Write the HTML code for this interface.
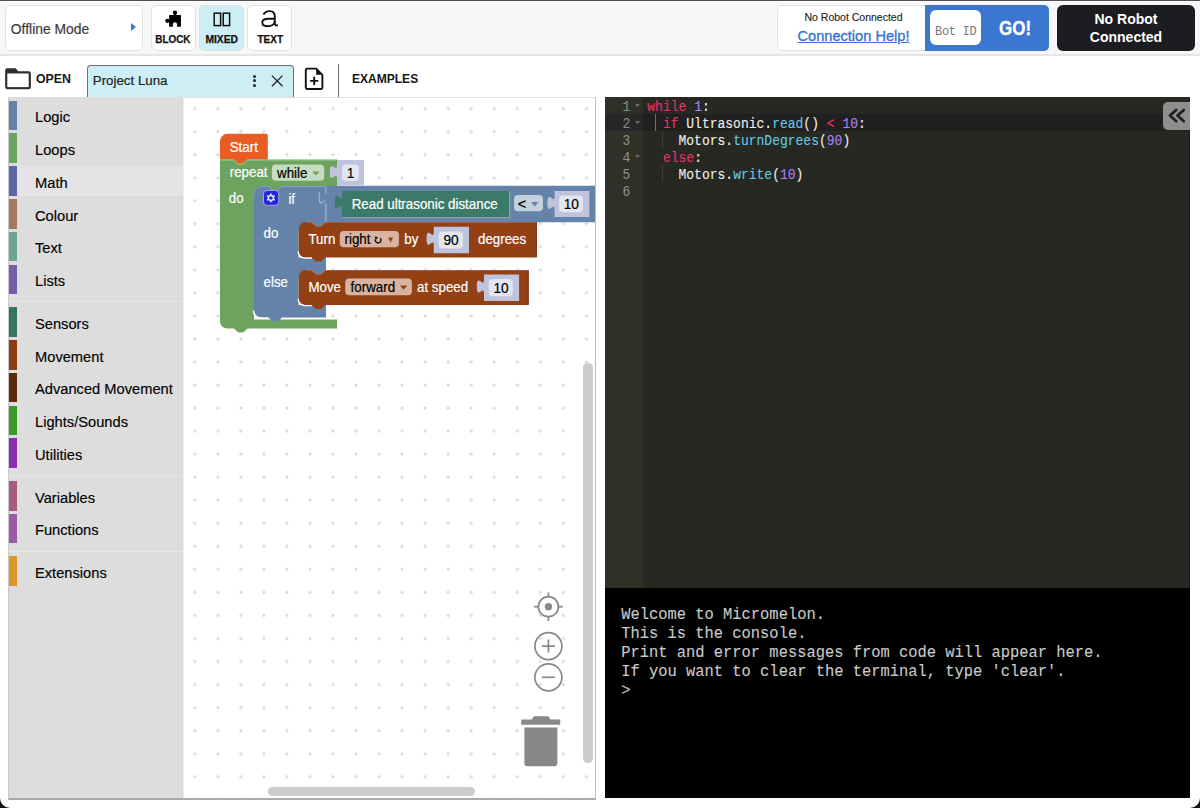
<!DOCTYPE html>
<html><head><meta charset="utf-8">
<style>
*{box-sizing:border-box}
html,body{margin:0;padding:0}
body{width:1200px;height:808px;position:relative;overflow:hidden;background:#fff;font-family:"Liberation Sans",sans-serif;color:#000}
.a{position:absolute}
.hbtn{position:absolute;top:5px;height:46px;background:#fff;border:1px solid #e2e2e2;border-radius:5px}
.cat{position:absolute;left:9px;width:174px;height:33px}
.cat .s{position:absolute;left:0.4px;top:0;width:7.6px;height:29.6px}
.cat .t{position:absolute;left:25.6px;top:1.6px;line-height:30px;font-size:15.4px;color:#000;white-space:nowrap;transform:scaleX(0.953);transform-origin:left;-webkit-text-stroke:0.15px #000}
.mono{font-family:"Liberation Mono",monospace}
</style></head>
<body>
<!--HEADER-->
<!-- top dark line -->
<div class="a" style="left:0;top:0;width:1200px;height:1px;background:#505050"></div>
<!-- header -->
<div class="a" style="left:0;top:2px;width:1200px;height:52px;background:#f7f7f7"></div>
<div class="a" style="left:0;top:54px;width:1200px;height:1.8px;background:#e6e6e6"></div>

<div class="hbtn" style="left:5px;width:138px"></div>
<div class="a" style="left:10.8px;top:19.5px;font-size:13.9px;color:#3c3c3c;line-height:18px;-webkit-text-stroke:0.2px #3c3c3c">Offline Mode</div>
<div class="a" style="left:131px;top:23.3px;width:0;height:0;border-left:5.6px solid #3a78d8;border-top:4.6px solid transparent;border-bottom:4.6px solid transparent"></div>

<div class="hbtn" style="left:150.6px;width:45px"></div>
<div class="hbtn" style="left:198.8px;width:45.2px;background:#cdeef5"></div>
<div class="hbtn" style="left:247.2px;width:45.3px"></div>
<div class="a" style="left:150.6px;top:32.6px;width:45px;text-align:center;font-size:11.2px;font-weight:bold;line-height:12px;color:#111;-webkit-text-stroke:0.25px #111"><span style="display:inline-block;transform:scaleX(0.885)">BLOCK</span></div>
<div class="a" style="left:198.8px;top:32.6px;width:45.2px;text-align:center;font-size:11.2px;font-weight:bold;line-height:12px;color:#111;-webkit-text-stroke:0.25px #111"><span style="display:inline-block;transform:scaleX(0.92)">MIXED</span></div>
<div class="a" style="left:247.2px;top:32.6px;width:45.3px;text-align:center;font-size:11.2px;font-weight:bold;line-height:12px;color:#111;-webkit-text-stroke:0.25px #111"><span style="display:inline-block;transform:scaleX(0.9)">TEXT</span></div>

<!-- header icons -->
<svg class="a" style="left:160px;top:8px" width="26" height="22" viewBox="160 8 26 22">
<rect x="169.1" y="14.9" width="11.85" height="11.9" rx="0.6" fill="#000"/>
<circle cx="175" cy="12.6" r="2.05" fill="#000"/><rect x="173.6" y="12.6" width="2.8" height="3" fill="#000"/>
<circle cx="167.3" cy="20.85" r="2.1" fill="#000"/><rect x="167.3" y="19.4" width="3" height="2.9" fill="#000"/>
<circle cx="175" cy="24.2" r="2.05" fill="#fff"/><rect x="172.95" y="24.2" width="4.1" height="3" fill="#fff"/>
</svg>
<svg class="a" style="left:210px;top:10px" width="24" height="19" viewBox="210 10 24 19">
<rect x="214.2" y="13.2" width="6.4" height="12.4" fill="none" stroke="#111" stroke-width="1.5"/>
<rect x="223.2" y="13.2" width="6.4" height="12.4" fill="none" stroke="#111" stroke-width="1.5"/>
</svg>
<svg class="a" style="left:258px;top:8px" width="24" height="22" viewBox="258 8 24 22">
<path d="M263.5,14.7 C264.6,12.2 266.8,11.1 269.6,11.1 C273.1,11.1 274.8,12.9 274.8,16.3 V23.8 C274.8,25.1 275.8,25.5 277.9,25.3" fill="none" stroke="#111" stroke-width="1.9"/>
<path d="M274.8,18.7 H268.5 C264.4,18.7 262.3,20.1 262.3,22.5 C262.3,24.9 264.2,26.2 267.2,26.2 C271.2,26.2 274.8,24.4 274.8,21.2" fill="none" stroke="#111" stroke-width="1.9"/>
</svg>

<!-- second row -->
<svg class="a" style="left:3px;top:66px" width="31" height="26" viewBox="3 66 31 26">
<path d="M5.15,70.5 Q5.15,68.3 7.35,68.3 H15.6 L18.3,71.3 H28.7 Q30.9,71.3 30.9,73.5 V87.1 Q30.9,89.3 28.7,89.3 H7.35 Q5.15,89.3 5.15,87.1 Z" fill="#2e2e2e"/>
<rect x="7.3" y="73.5" width="21.4" height="13.6" fill="#fff"/>
</svg>
<div class="a" style="left:36px;top:71px;font-size:13px;font-weight:bold;line-height:16px;color:#161616"><span style="display:inline-block;transform:scaleX(0.95);transform-origin:left">OPEN</span></div>

<div class="a" style="left:87px;top:65px;width:207px;height:32.4px;background:#cdeef5;border:1.2px solid #6e6e6e;border-bottom:none;border-radius:4px 4px 0 0"></div>
<div class="a" style="left:92.8px;top:73.3px;font-size:13.3px;line-height:16px;color:#222;-webkit-text-stroke:0.2px #222">Project Luna</div>
<div class="a" style="left:253.1px;top:75px;width:3px;height:3px;border-radius:50%;background:#222"></div>
<div class="a" style="left:253.1px;top:79.3px;width:3px;height:3px;border-radius:50%;background:#222"></div>
<div class="a" style="left:253.1px;top:83.6px;width:3px;height:3px;border-radius:50%;background:#222"></div>
<svg class="a" style="left:271px;top:75px" width="12" height="12" viewBox="0 0 12 12"><path d="M0.9,0.6 L11.5,11.3 M11.5,0.6 L0.9,11.3" stroke="#222" stroke-width="1.3"/></svg>

<svg class="a" style="left:303px;top:65px" width="23" height="27" viewBox="303 65 23 27">
<path d="M307.2,68.6 H316.2 L322.4,74.8 V87.6 C322.4,88.5 321.8,89 321,89 H307.2 C306.4,89 305.8,88.5 305.8,87.6 V70 C305.8,69.1 306.4,68.6 307.2,68.6 Z" fill="none" stroke="#111" stroke-width="1.9" stroke-linejoin="round"/>
<path d="M316.2,68.6 V74.8 H322.4 Z" fill="#111"/>
<path d="M314.2,76.8 V85 M310.1,80.9 H318.3" stroke="#111" stroke-width="1.9"/>
</svg>
<div class="a" style="left:338.3px;top:64.4px;width:1.2px;height:32.5px;background:#666"></div>
<div class="a" style="left:352.3px;top:71px;font-size:12.6px;font-weight:bold;line-height:16px;color:#161616"><span style="display:inline-block;transform:scaleX(0.955);transform-origin:left">EXAMPLES</span></div>

<!-- connection box -->
<div class="a" style="left:777.3px;top:4.7px;width:272px;height:46.6px;background:#fff;border:1px solid #e2e2e2;border-radius:5px"></div>
<div class="a" style="left:925.3px;top:4.7px;width:124px;height:46.6px;background:#3b76d0;border-radius:0 5px 5px 0"></div>
<div class="a" style="left:777px;top:11.2px;width:153px;text-align:center;font-size:10.5px;line-height:13px;color:#222;-webkit-text-stroke:0.12px #222">No Robot Connected</div>
<div class="a" style="left:777px;top:27.3px;width:153px;text-align:center;font-size:14.6px;line-height:18px;color:#3a74d0;text-decoration:underline;-webkit-text-stroke:0.35px #3a74d0">Connection Help!</div>
<div class="a" style="left:930px;top:10px;width:50.7px;height:35.3px;background:#fff;border-radius:6px"></div>
<div class="a mono" style="left:935px;top:25.3px;font-size:12px;line-height:14px;color:#777;letter-spacing:-0.3px">Bot ID</div>
<div class="a" style="left:999.3px;top:16.5px;font-size:19.5px;font-weight:bold;line-height:22px;color:#fff;-webkit-text-stroke:0.3px #fff"><span style="display:inline-block;transform:scaleX(0.87);transform-origin:left">GO!</span></div>
<div class="a" style="left:1057px;top:5px;width:138px;height:45.6px;background:#1c1d20;border-radius:6px"></div>
<div class="a" style="left:1057px;top:10px;width:138px;text-align:center;font-size:14px;font-weight:bold;line-height:18px;color:#fff">No Robot<br>Connected</div>

<!--/HEADER-->
<!--TOOLBOX-->
<!-- workspace -->
<div class="a" style="left:8px;top:96.5px;width:588px;height:703.5px;background:#fff;border-top:1.5px solid #e0e0e0;border-left:1px solid #c8c8c8;border-right:1.5px solid #bdbdbd;border-bottom:2px solid #aaa"></div>
<svg class="a" style="left:183px;top:97px" width="412" height="701" viewBox="183 97 412 701">
<defs><pattern id="grid" x="217.8" y="131.6" width="23.04" height="23.04" patternUnits="userSpaceOnUse">
<path d="M-1.7 0h3.4M0 -1.7v3.4" stroke="#c8c8c8" stroke-width="0.9"/>
<path d="M21.34 0h3.4M23.04 -1.7v3.4M-1.7 23.04h3.4M0 21.34v3.4M21.34 23.04h3.4M23.04 21.34v3.4" stroke="#c8c8c8" stroke-width="0.9"/>
</pattern></defs>
<rect x="183" y="97" width="412" height="701" fill="url(#grid)"/>
</svg>
<div class="a" style="left:9px;top:97px;width:174px;height:701px;background:#dddddd;border-right:0.8px solid #d8d8d8"></div>
<div class="a" style="left:183px;top:97px;width:1.3px;height:701px;background:#f0f0f0"></div>
<div class="a" style="left:9px;top:166.2px;width:174px;height:30px;background:#e4e4e4"></div>
<div class="a" style="left:9px;top:301px;width:174px;height:1px;background:#e6e6e6"></div>
<div class="a" style="left:9px;top:475px;width:174px;height:1px;background:#e6e6e6"></div>
<div class="a" style="left:9px;top:550.5px;width:174px;height:1px;background:#e6e6e6"></div>
<div class="cat" style="top:100.6px"><div class="s" style="background:#6681a8"></div><div class="t">Logic</div></div>
<div class="cat" style="top:133.4px"><div class="s" style="background:#6ba360"></div><div class="t">Loops</div></div>
<div class="cat" style="top:166.2px"><div class="s" style="background:#5e68a6"></div><div class="t">Math</div></div>
<div class="cat" style="top:199.0px"><div class="s" style="background:#a5795f"></div><div class="t">Colour</div></div>
<div class="cat" style="top:231.8px"><div class="s" style="background:#6ca68f"></div><div class="t">Text</div></div>
<div class="cat" style="top:264.6px"><div class="s" style="background:#775ea8"></div><div class="t">Lists</div></div>
<div class="cat" style="top:307.2px"><div class="s" style="background:#357465"></div><div class="t">Sensors</div></div>
<div class="cat" style="top:340.0px"><div class="s" style="background:#8e3c12"></div><div class="t">Movement</div></div>
<div class="cat" style="top:372.8px"><div class="s" style="background:#5a2a0c"></div><div class="t">Advanced Movement</div></div>
<div class="cat" style="top:405.6px"><div class="s" style="background:#3e9a26"></div><div class="t">Lights/Sounds</div></div>
<div class="cat" style="top:438.4px"><div class="s" style="background:#8a2db0"></div><div class="t">Utilities</div></div>
<div class="cat" style="top:481.0px"><div class="s" style="background:#a55b80"></div><div class="t">Variables</div></div>
<div class="cat" style="top:513.8px"><div class="s" style="background:#995ba5"></div><div class="t">Functions</div></div>
<div class="cat" style="top:556.4px"><div class="s" style="background:#d9962a"></div><div class="t">Extensions</div></div>

<!--/TOOLBOX-->
<!--BLOCKS-->
<svg class="a" style="left:183px;top:97px" width="412" height="701" viewBox="183 97 412 701" font-family="Liberation Sans, sans-serif">
<path d="M220,159.6 V141 A7.2,7.2 0 0 1 227.2,133.8 H266.3 Q267.8,133.8 267.8,135.3 V159.6 H247.2 L243,163.7 H238 L233.7,159.6 Z" fill="#e85d24"/>
<text transform="translate(229.70,151.90) scale(0.940,1)" fill="#fff" stroke="#fff" stroke-width="0.2" font-size="14.2">Start</text>
<path d="M220,159.6 H233.7 L238,163.7 H243 L247.2,159.6 H337 V186.6 H282.0 L277.7,190.0 H272.7 L268.5,186.6 H254 V319.4 H337 V328.5 H247.6 L243.3,332.6 H238.3 L233.9,328.5 H227.2 A7.2,7.2 0 0 1 220,321.3 Z" fill="#6ca35f"/>
<path d="M221,160.6 H233.4 L238,164.6 H243 L247.5,160.6 H336" fill="none" stroke="#8dc282" stroke-width="1" opacity="0.8"/>
<text transform="translate(229.70,177.10) scale(0.940,1)" fill="#fff" stroke="#fff" stroke-width="0.2" font-size="14.2">repeat</text>
<text transform="translate(228.80,202.70) scale(0.940,1)" fill="#fff" stroke="#fff" stroke-width="0.2" font-size="14.2">do</text>
<rect x="271.90" y="164.50" width="52.30" height="16.20" rx="4" fill="#c5dcbf"/><text transform="translate(277.00,177.60) scale(0.940,1)" fill="#000" stroke="#000" stroke-width="0.2" font-size="14.2">while</text><path d="M312.20,171.50 H319.60 L315.90,175.40 Z" fill="#6ca35f"/>
<path d="M337.00,160.00 H364.00 V185.30 H337.00 L337.00,178.70 c0,-9 -7.2,7.2 -7.2,-6.75 s7.2,2.25 7.2,-6.75 Z" fill="#c0c3dd"/><rect x="342.00" y="164.50" width="16.80" height="16.50" rx="4" fill="#e3e5f0"/><text transform="translate(346.70,177.60) scale(0.940,1)" fill="#000" stroke="#000" stroke-width="0.2" font-size="14.6">1</text>
<rect x="253.5" y="185.3" width="9" height="9" fill="#6ca35f"/>
<path d="M254,193 A7.2,7.2 0 0 1 261.2,185.8 H268.5 L272.7,189.8 H277.7 L282,185.8 H326 V222 H325.3 L321,226 H316 L311.7,222 H298.7 V257.5 H326 V270 H325.3 L321,274 H316 L311.7,270 H298.7 V305 H326 V317.6 H282 L277.7,321.6 H272.7 L268.5,317.6 H261.2 A7.2,7.2 0 0 1 254,310.4 Z" fill="#6582a8"/>
<rect x="298" y="221.5" width="9" height="9" fill="#6582a8"/><rect x="298" y="269.5" width="9" height="9" fill="#6582a8"/>
<path d="M253.4,310.4 A7.8,7.8 0 0 0 261.2,318.2 H268" fill="none" stroke="#fff" stroke-width="1.3"/>
<path d="M326,185.8 H600 V222.2 H326 L326.00,203.80 c0,-9 -7.2,7.2 -7.2,-6.75 s7.2,2.25 7.2,-6.75 Z" fill="#6582a8"/>
<path d="M325.9,186.3 V193.4 M319.5,192.2 C318.7,195 318.7,200 320.4,203.5 L325.4,200.7 M325.9,203.3 V221.8" stroke="#bccae0" stroke-width="0.9" fill="none"/>
<path d="M342,191 H509.2 V217.1 H342 L342.00,209.00 c0,-9 -7.2,7.2 -7.2,-6.75 s7.2,2.25 7.2,-6.75 Z" fill="#3b7a69"/>
<text transform="translate(351.70,209.30) scale(0.940,1)" fill="#fff" stroke="#fff" stroke-width="0.2" font-size="14.2">Read ultrasonic distance</text>
<rect x="514.00" y="195.10" width="29.00" height="16.10" rx="4" fill="#c5d0df"/><text transform="translate(517.80,208.10) scale(0.940,1)" fill="#000" stroke="#000" stroke-width="0.2" font-size="14.2"><tspan font-size="15.5" dy="0.6">&lt;</tspan></text><path d="M531.20,202.00 H538.30 L534.75,206.60 Z" fill="#6582a8"/>
<path d="M554.60,191.00 H589.40 V217.10 H554.60 L554.60,209.70 c0,-9 -7.2,7.2 -7.2,-6.75 s7.2,2.25 7.2,-6.75 Z" fill="#c0c3dd"/><rect x="559.20" y="195.60" width="23.80" height="16.70" rx="4" fill="#e3e5f0"/><text transform="translate(563.70,208.90) scale(0.940,1)" fill="#000" stroke="#000" stroke-width="0.2" font-size="14.6">10</text>
<rect x="263.5" y="190.4" width="15.2" height="15" rx="3.6" fill="#2525e4" stroke="#a9b6d6" stroke-width="0.9"/>
<g transform="translate(270.9,197.9)"><path d="M-1.24,-3.06 L-0.74,-3.22 L-0.86,-4.42 L0.86,-4.42 L0.74,-3.22 L2.03,-2.60 L2.41,-2.25 L3.40,-2.95 L4.25,-1.47 L3.16,-0.96 L3.27,0.46 L3.16,0.96 L4.25,1.47 L3.40,2.95 L2.41,2.25 L1.24,3.06 L0.74,3.22 L0.86,4.42 L-0.86,4.42 L-0.74,3.22 L-2.03,2.60 L-2.41,2.25 L-3.40,2.95 L-4.25,1.47 L-3.16,0.96 L-3.27,-0.46 L-3.16,-0.96 L-4.25,-1.47 L-3.40,-2.95 L-2.41,-2.25 Z" fill="#e6e6f2"/><circle r="1.75" fill="#2525e4"/></g>
<path d="M254.5,193.2 A6.8,6.8 0 0 1 261.3,186.4 H268.3 L272.6,190.3 H277.8 L282.1,186.4 H325.6" fill="none" stroke="#8ea6c8" stroke-width="0.9"/>
<text transform="translate(288.40,203.50) scale(0.940,1)" fill="#fff" stroke="#fff" stroke-width="0.2" font-size="14.2">if</text>
<text transform="translate(263.50,238.30) scale(0.940,1)" fill="#fff" stroke="#fff" stroke-width="0.2" font-size="14.2">do</text>
<text transform="translate(263.50,286.50) scale(0.940,1)" fill="#fff" stroke="#fff" stroke-width="0.2" font-size="14.2">else</text>
<path d="M298.7,229.2 A7.2,7.2 0 0 1 305.9,222 H311.7 L316,226 H321 L325.3,222 H536.9 V257.5 H325.3 L321,261.5 H316 L311.7,257.5 H304.9 A6.2,6.2 0 0 1 298.7,251.3 Z" fill="#934015"/>
<path d="M298.1,251.3 A6.8,6.8 0 0 0 304.9,258.1 H312" fill="none" stroke="#fff" stroke-width="1.3"/>
<text transform="translate(308.40,244.20) scale(0.940,1)" fill="#fff" stroke="#fff" stroke-width="0.2" font-size="14.2">Turn</text>
<rect x="339.8" y="231" width="59.1" height="16.3" rx="4" fill="#d8b3a1"/>
<text transform="translate(344.50,244.10) scale(0.940,1)" fill="#000" stroke="#000" stroke-width="0.2" font-size="14.2">right</text>
<path d="M380.4,238.2 A2.9,2.9 0 1 1 375.3,239.4" fill="none" stroke="#111" stroke-width="1.4"/><path d="M374.6,236.5 L378.2,237.3 L375.7,240.1 Z" fill="#111"/>
<path d="M388,237.4 H393.2 L390.6,242.6 Z" fill="#934015"/>
<text transform="translate(404.30,244.20) scale(0.940,1)" fill="#fff" stroke="#fff" stroke-width="0.2" font-size="14.2">by</text>
<path d="M433.80,226.80 H469.00 V253.20 H433.80 L433.80,245.50 c0,-9 -7.2,7.2 -7.2,-6.75 s7.2,2.25 7.2,-6.75 Z" fill="#c0c3dd"/><rect x="438.70" y="231.60" width="24.20" height="16.90" rx="4" fill="#e3e5f0"/><text transform="translate(443.40,245.10) scale(0.940,1)" fill="#000" stroke="#000" stroke-width="0.2" font-size="14.6">90</text>
<text transform="translate(478.00,244.20) scale(0.940,1)" fill="#fff" stroke="#fff" stroke-width="0.2" font-size="14.2">degrees</text>
<path d="M298.7,277.2 A7.2,7.2 0 0 1 305.9,270 H311.7 L316,274 H321 L325.3,270 H528.7 V305 H325.3 L321,309 H316 L311.7,305 H304.9 A6.2,6.2 0 0 1 298.7,298.8 Z" fill="#934015"/>
<path d="M298.1,298.8 A6.8,6.8 0 0 0 304.9,305.6 H312" fill="none" stroke="#fff" stroke-width="1.3"/>
<text transform="translate(308.40,292.10) scale(0.940,1)" fill="#fff" stroke="#fff" stroke-width="0.2" font-size="14.2">Move</text>
<rect x="345.30" y="278.40" width="66.60" height="16.80" rx="4" fill="#d8b3a1"/><text transform="translate(350.60,292.10) scale(0.940,1)" fill="#000" stroke="#000" stroke-width="0.2" font-size="14.2">forward</text><path d="M400.00,285.50 H407.20 L403.60,289.80 Z" fill="#934015"/>
<text transform="translate(417.00,292.10) scale(0.940,1)" fill="#fff" stroke="#fff" stroke-width="0.2" font-size="14.2">at speed</text>
<path d="M484.00,274.60 H519.10 V301.00 H484.00 L484.00,293.30 c0,-9 -7.2,7.2 -7.2,-6.75 s7.2,2.25 7.2,-6.75 Z" fill="#c0c3dd"/><rect x="488.70" y="279.10" width="24.20" height="17.10" rx="4" fill="#e3e5f0"/><text transform="translate(493.40,292.80) scale(0.940,1)" fill="#000" stroke="#000" stroke-width="0.2" font-size="14.6">10</text>
<path d="M305.9,222.5 H311.9 L316.2,226.5 H320.8 L325.1,222.5 H536.4" fill="none" stroke="#b26a45" stroke-width="0.9" opacity="0.9"/>
<path d="M305.9,270.5 H311.9 L316.2,274.5 H320.8 L325.1,270.5 H528.2" fill="none" stroke="#b26a45" stroke-width="0.9" opacity="0.9"/>
<path d="M536.4,222.5 V257" stroke="#7a3411" stroke-width="0.9"/><path d="M528.2,270.5 V304.5" stroke="#7a3411" stroke-width="0.9"/>
<path d="M509.8,191.2 V217.7 H342.5" fill="none" stroke="#9bb0cc" stroke-width="0.9"/>
</svg>
<!--/BLOCKS-->
<!--CONTROLS-->
<!-- workspace controls -->
<svg class="a" style="left:520px;top:585px" width="50" height="190" viewBox="520 585 50 190">
<g stroke="#888" fill="none" stroke-width="1.7">
<circle cx="548.4" cy="606.7" r="10"/>
<path d="M548.4,592.4v5M548.4,616v5M534,606.7h5M557.8,606.7h5"/>
<circle cx="548.4" cy="646.1" r="13.5"/>
<path d="M548.4,639.6v13M541.9,646.1h13"/>
<circle cx="548.4" cy="677.3" r="13.5"/>
<path d="M541.9,677.3h13"/>
</g>
<circle cx="548.4" cy="606.7" r="3.7" fill="#888"/>
<path d="M521.3,719.4 H531.7 L533.8,716.3 H548.4 L550.5,719.4 H560.2 V724.7 H521.3 Z" fill="#888"/>
<path d="M524.4,727.4 H557.4 V763 A3.2,3.2 0 0 1 554.2,766.2 H527.6 A3.2,3.2 0 0 1 524.4,763 Z" fill="#888"/>
</svg>
<!-- scrollbars -->
<div class="a" style="left:583.4px;top:363.4px;width:9.2px;height:399.4px;border-radius:4.6px;background:#cccccc"></div>
<div class="a" style="left:268.3px;top:786.5px;width:207.2px;height:9.5px;border-radius:4.75px;background:#cccccc"></div>

<!--/CONTROLS-->
<!--EDITOR-->
<div class="a" style="left:605px;top:97px;width:584.8px;height:491px;background:#272822;border-right:1px solid #1b1c18"></div>
<div class="a" style="left:605px;top:97px;width:38px;height:491px;background:#2f3129"></div>
<div class="a" style="left:605px;top:114px;width:38px;height:17px;background:#272727"></div>
<div class="a" style="left:643px;top:114px;width:546px;height:17px;background:#202020"></div>
<div class="a" style="left:655px;top:114px;width:1px;height:17px;background:#6e6e6e"></div>
<div class="a" style="left:662px;top:131px;width:1px;height:17px;background:#3f3f3a"></div>
<div class="a" style="left:662px;top:165px;width:1px;height:17px;background:#3f3f3a"></div>
<div class="a mono" style="left:605px;top:98.8px;width:25.3px;text-align:right;font-size:13px;line-height:17px;color:#8f908a;transform-origin:0 11.97px;transform:scaleY(1.18)">1</div>
<svg class="a" style="left:635px;top:104px" width="5" height="3" viewBox="0 0 5 3"><path d="M0,0H5L2.5,3Z" fill="#6c6d68"/></svg>
<div class="a mono" style="left:647.3px;top:98.8px;font-size:13px;line-height:17px;white-space:pre;transform-origin:0 11.97px;transform:scaleY(1.18);-webkit-text-stroke:0.1px currentColor"><span style="color:#e8336f">while</span><span style="color:#f0f0ec">&#160;</span><span style="color:#a982f7">1</span><span style="color:#f0f0ec">:</span></div>
<div class="a mono" style="left:605px;top:115.8px;width:25.3px;text-align:right;font-size:13px;line-height:17px;color:#8f908a;transform-origin:0 11.97px;transform:scaleY(1.18)">2</div>
<svg class="a" style="left:635px;top:121px" width="5" height="3" viewBox="0 0 5 3"><path d="M0,0H5L2.5,3Z" fill="#6c6d68"/></svg>
<div class="a mono" style="left:647.3px;top:115.8px;font-size:13px;line-height:17px;white-space:pre;transform-origin:0 11.97px;transform:scaleY(1.18);-webkit-text-stroke:0.1px currentColor"><span style="color:#f0f0ec">&#160;&#160;</span><span style="color:#e8336f">if</span><span style="color:#f0f0ec">&#160;Ultrasonic.</span><span style="color:#68c8e2">read</span><span style="color:#f0f0ec">()&#160;</span><span style="color:#e8336f">&lt;</span><span style="color:#f0f0ec">&#160;</span><span style="color:#a982f7">10</span><span style="color:#f0f0ec">:</span></div>
<div class="a mono" style="left:605px;top:132.8px;width:25.3px;text-align:right;font-size:13px;line-height:17px;color:#8f908a;transform-origin:0 11.97px;transform:scaleY(1.18)">3</div>
<div class="a mono" style="left:647.3px;top:132.8px;font-size:13px;line-height:17px;white-space:pre;transform-origin:0 11.97px;transform:scaleY(1.18);-webkit-text-stroke:0.1px currentColor"><span style="color:#f0f0ec">&#160;&#160;&#160;&#160;Motors.</span><span style="color:#68c8e2">turnDegrees</span><span style="color:#f0f0ec">(</span><span style="color:#a982f7">90</span><span style="color:#f0f0ec">)</span></div>
<div class="a mono" style="left:605px;top:149.8px;width:25.3px;text-align:right;font-size:13px;line-height:17px;color:#8f908a;transform-origin:0 11.97px;transform:scaleY(1.18)">4</div>
<svg class="a" style="left:635px;top:155px" width="5" height="3" viewBox="0 0 5 3"><path d="M0,0H5L2.5,3Z" fill="#6c6d68"/></svg>
<div class="a mono" style="left:647.3px;top:149.8px;font-size:13px;line-height:17px;white-space:pre;transform-origin:0 11.97px;transform:scaleY(1.18);-webkit-text-stroke:0.1px currentColor"><span style="color:#f0f0ec">&#160;&#160;</span><span style="color:#e8336f">else</span><span style="color:#f0f0ec">:</span></div>
<div class="a mono" style="left:605px;top:166.8px;width:25.3px;text-align:right;font-size:13px;line-height:17px;color:#8f908a;transform-origin:0 11.97px;transform:scaleY(1.18)">5</div>
<div class="a mono" style="left:647.3px;top:166.8px;font-size:13px;line-height:17px;white-space:pre;transform-origin:0 11.97px;transform:scaleY(1.18);-webkit-text-stroke:0.1px currentColor"><span style="color:#f0f0ec">&#160;&#160;&#160;&#160;Motors.</span><span style="color:#68c8e2">write</span><span style="color:#f0f0ec">(</span><span style="color:#a982f7">10</span><span style="color:#f0f0ec">)</span></div>
<div class="a mono" style="left:605px;top:183.8px;width:25.3px;text-align:right;font-size:13px;line-height:17px;color:#8f908a;transform-origin:0 11.97px;transform:scaleY(1.18)">6</div>
<div class="a" style="left:1162.8px;top:101.6px;width:27.7px;height:28px;background:#8e8e8e;border-radius:5px 0 0 5px"></div>
<svg class="a" style="left:1166px;top:106px" width="22" height="19" viewBox="0 0 22 19"><path d="M10.2,4.0 L3.9,9.6 L10.2,15.2 M17.8,4.0 L11.5,9.6 L17.8,15.2" fill="none" stroke="#1e1e1e" stroke-width="2.7" stroke-linecap="round" stroke-linejoin="round"/></svg>
<div class="a" style="left:605px;top:588px;width:584.8px;height:210.3px;background:#000"></div>
<div class="a mono" style="left:621.3px;top:605.5px;font-size:15.43px;line-height:19px;color:#c9c9c9;white-space:pre;transform-origin:0 13.6px;transform:scaleY(1.12);-webkit-text-stroke:0.12px #c9c9c9">Welcome to Micromelon.</div>
<div class="a mono" style="left:621.3px;top:624.5px;font-size:15.43px;line-height:19px;color:#c9c9c9;white-space:pre;transform-origin:0 13.6px;transform:scaleY(1.12);-webkit-text-stroke:0.12px #c9c9c9">This is the console.</div>
<div class="a mono" style="left:621.3px;top:643.5px;font-size:15.43px;line-height:19px;color:#c9c9c9;white-space:pre;transform-origin:0 13.6px;transform:scaleY(1.12);-webkit-text-stroke:0.12px #c9c9c9">Print and error messages from code will appear here.</div>
<div class="a mono" style="left:621.3px;top:662.5px;font-size:15.43px;line-height:19px;color:#c9c9c9;white-space:pre;transform-origin:0 13.6px;transform:scaleY(1.12);-webkit-text-stroke:0.12px #c9c9c9">If you want to clear the terminal, type &#39;clear&#39;.</div>
<div class="a mono" style="left:621.3px;top:681.5px;font-size:15.43px;line-height:19px;color:#c9c9c9;white-space:pre;transform-origin:0 13.6px;transform:scaleY(1.12);-webkit-text-stroke:0.12px #c9c9c9">></div>
<svg class="a" style="left:0;top:798px" width="10" height="10" viewBox="0 0 10 10"><path d="M0,0 A10,10 0 0 0 10,10 H0 Z" fill="#111"/></svg>
<svg class="a" style="left:1190px;top:798px" width="10" height="10" viewBox="0 0 10 10"><path d="M10,0 A10,10 0 0 1 0,10 H10 Z" fill="#111"/></svg>
<!--/EDITOR-->
</body></html>
